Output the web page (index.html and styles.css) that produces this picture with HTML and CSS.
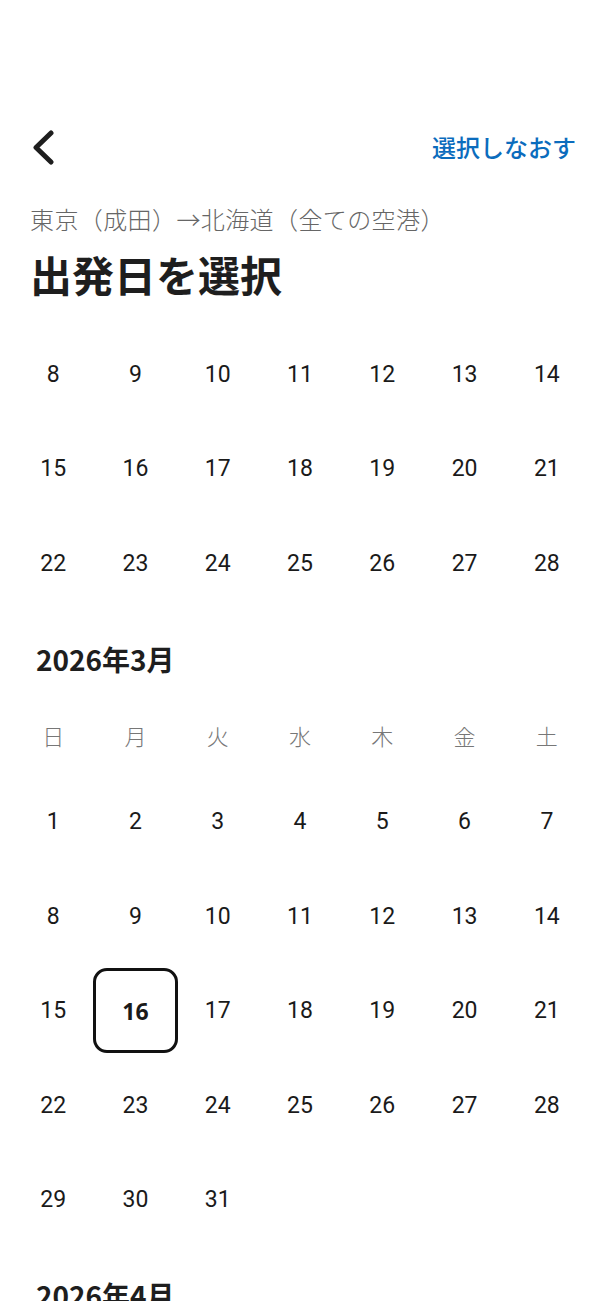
FILE: index.html
```html
<!DOCTYPE html>
<html lang="ja">
<head>
  <meta charset="UTF-8" />
  <meta name="viewport" content="width=device-width, initial-scale=1.0"/>
  <title>出発日を選択</title>
  <link rel="stylesheet" href="styles.css">
</head>
<body>
  <div class="page">
    <header class="header">
      <div class="topbar">
        <button class="back" aria-label="戻る">
          <svg width="26" height="36" viewBox="0 0 26 36">
            <polyline points="20,3 5,17.5 20,32" fill="none" stroke="#1e1e1e" stroke-width="5" stroke-linecap="round" stroke-linejoin="round"/>
          </svg>
        </button>
        <a class="reset" href="#">選択しなおす</a>
      </div>
      <p class="route">東京（成田）→北海道（全ての空港）</p>
      <h1>出発日を選択</h1>
    </header>

    <div class="calendar">
      <!-- 2月: 上の週はスクロールで隠れている -->
      <section class="month">
        <div class="days">
          <span>8</span><span>9</span><span>10</span><span>11</span><span>12</span><span>13</span><span>14</span>
          <span>15</span><span>16</span><span>17</span><span>18</span><span>19</span><span>20</span><span>21</span>
          <span>22</span><span>23</span><span>24</span><span>25</span><span>26</span><span>27</span><span>28</span>
        </div>
      </section>

      <section class="month">
        <h2>2026年3月</h2>
        <div class="weekdays">
          <span>日</span><span>月</span><span>火</span><span>水</span><span>木</span><span>金</span><span>土</span>
        </div>
        <div class="days">
          <span>1</span><span>2</span><span>3</span><span>4</span><span>5</span><span>6</span><span>7</span>
          <span>8</span><span>9</span><span>10</span><span>11</span><span>12</span><span>13</span><span>14</span>
          <span>15</span><span class="selected">16</span><span>17</span><span>18</span><span>19</span><span>20</span><span>21</span>
          <span>22</span><span>23</span><span>24</span><span>25</span><span>26</span><span>27</span><span>28</span>
          <span>29</span><span>30</span><span>31</span>
        </div>
      </section>

      <section class="month">
        <h2>2026年4月</h2>
      </section>
    </div>
  </div>
</body>
</html>
```

FILE: styles.css
```css
html, body {
  margin: 0;
  padding: 0;
  background: #fff;
}
body {
  font-family: "Noto Sans CJK JP", "Noto Sans", sans-serif;
  color: #1e1e1e;
  height: 1301px;
  overflow: hidden;
}
.page {
  padding-top: 120px;
}
.header {
  padding: 0 24px 0 30px;
}
.topbar {
  display: flex;
  align-items: center;
  justify-content: space-between;
  height: 56px;
}
.back {
  display: flex;
  align-items: center;
  padding: 0;
  margin: 0 0 0 1px;
  border: none;
  background: none;
  cursor: pointer;
}
.back svg {
  display: block;
}
.reset {
  color: #0b6cbd;
  font-size: 24px;
  font-weight: 500;
  text-decoration: none;
  line-height: 1;
  margin-top: -3px;
}
.route {
  margin: 27px 0 0;
  font-size: 24px;
  font-weight: 300;
  line-height: 32px;
  color: #666;
  letter-spacing: 0.4px;
}
h1 {
  margin: 11px 0 0;
  font-size: 42px;
  font-weight: 700;
  line-height: 56px;
  color: #1e1e1e;
}
.calendar {
  margin-top: 25px;
  padding: 0 12px;
}
.month h2 {
  margin: 28px 0 24px 24px;
  font-size: 28px;
  font-weight: 700;
  line-height: 40px;
  color: #1e1e1e;
}
.weekdays,
.days {
  display: grid;
  grid-template-columns: repeat(7, 1fr);
}
.weekdays {
  margin-bottom: 8px;
}
.weekdays span {
  height: 64px;
  display: flex;
  align-items: center;
  justify-content: center;
  font-size: 22px;
  font-weight: 300;
  color: #777;
}
.days span {
  height: 94.5px;
  display: flex;
  align-items: center;
  justify-content: center;
  font-family: Roboto, "Noto Sans", sans-serif;
  font-size: 23px;
  color: #1a1a1a;
}
.days .selected {
  height: 85px;
  margin: 4.75px -1px;
  border: 3px solid #111;
  border-radius: 14px;
  box-sizing: border-box;
  font-family: "Noto Sans", sans-serif;
  font-weight: 700;
}
```
